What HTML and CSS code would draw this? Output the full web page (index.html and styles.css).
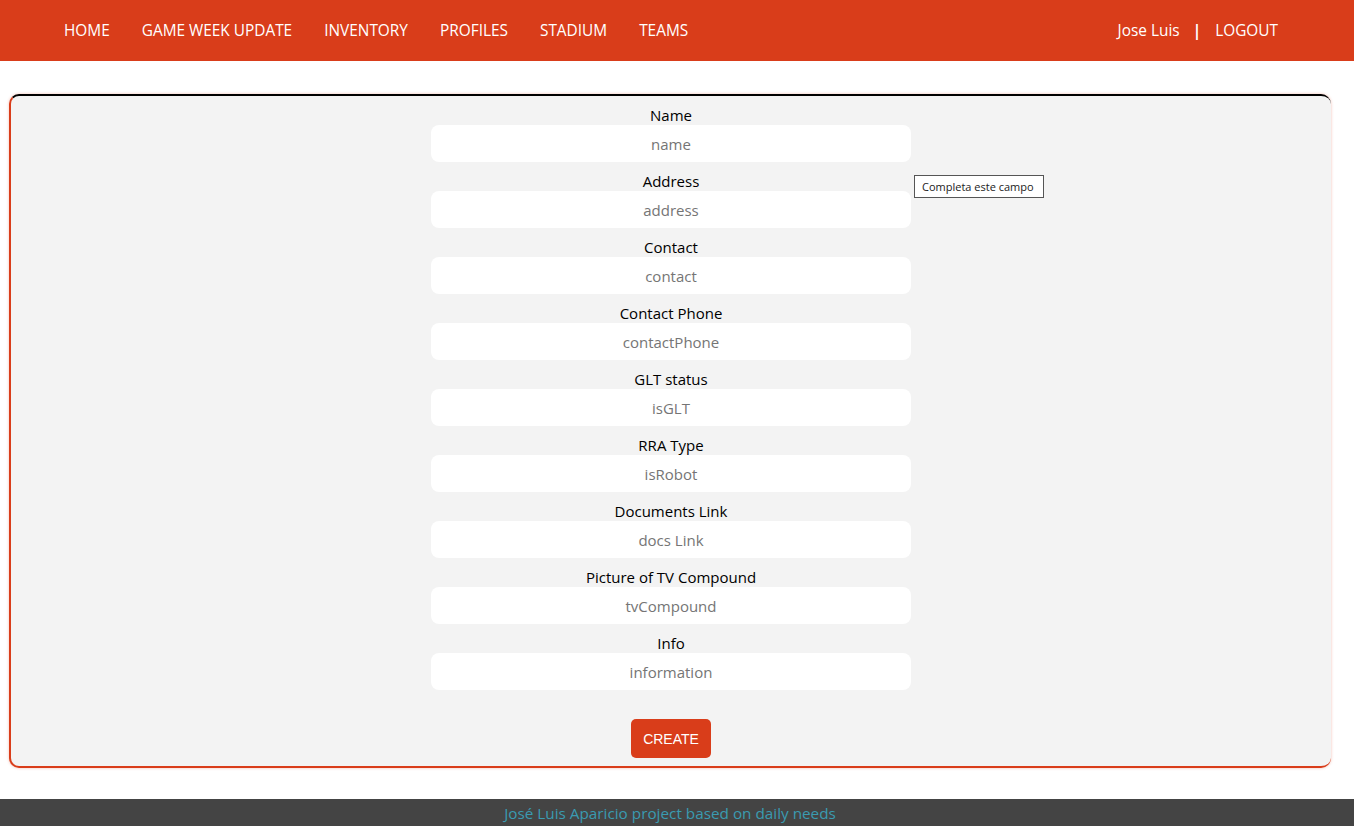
FILE: index.html
```html
<!DOCTYPE html>
<html lang="en">

<head>
  <meta charset="UTF-8" />
  <meta name="viewport" content="width=device-width, initial-scale=1.0" />
  <title>Stadium - Create</title>
  <link rel="stylesheet" href="styles.css">
</head>

<body>
  <header class="navbar">
    <ul class="nav-links">
      <li><a href="#">HOME</a></li>
      <li><a href="#">GAME WEEK UPDATE</a></li>
      <li><a href="#">INVENTORY</a></li>
      <li><a href="#">PROFILES</a></li>
      <li><a href="#">STADIUM</a></li>
      <li><a href="#">TEAMS</a></li>
    </ul>
    <div class="user-box">
      <span class="user-name">Jose Luis</span>
      <span class="divider">|</span>
      <a href="#">LOGOUT</a>
    </div>
  </header>

  <main class="card">
    <form class="stadium-form">
      <div class="field">
        <label for="name">Name</label>
        <input id="name" type="text" placeholder="name" required />
      </div>
      <div class="field">
        <label for="address">Address</label>
        <input id="address" type="text" placeholder="address" required />
        <div class="tooltip">Completa este campo</div>
      </div>
      <div class="field">
        <label for="contact">Contact</label>
        <input id="contact" type="text" placeholder="contact" />
      </div>
      <div class="field">
        <label for="contactPhone">Contact Phone</label>
        <input id="contactPhone" type="text" placeholder="contactPhone" />
      </div>
      <div class="field">
        <label for="isGLT">GLT status</label>
        <input id="isGLT" type="text" placeholder="isGLT" />
      </div>
      <div class="field">
        <label for="isRobot">RRA Type</label>
        <input id="isRobot" type="text" placeholder="isRobot" />
      </div>
      <div class="field">
        <label for="docsLink">Documents Link</label>
        <input id="docsLink" type="text" placeholder="docs Link" />
      </div>
      <div class="field">
        <label for="tvCompound">Picture of TV Compound</label>
        <input id="tvCompound" type="text" placeholder="tvCompound" />
      </div>
      <div class="field">
        <label for="info">Info</label>
        <input id="info" type="text" placeholder="information" />
      </div>
      <button type="button" class="btn-create">CREATE</button>
    </form>
  </main>

  <footer class="footer">
    José Luis Aparicio project based on daily needs
  </footer>
</body>

</html>
```

FILE: styles.css
```css
body {
  font-family: 'Open Sans', 'Noto Sans', sans-serif;
  background-color: #fff;
  margin: 0;
  padding: 0;
}

a {
  color: #fff;
  text-decoration: none;
}

.navbar {
  display: flex;
  justify-content: space-between;
  align-items: center;
  height: 61px;
  padding: 0 76px 1px 64px;
  box-sizing: border-box;
  background-color: #d93d1a;
  color: #fff;
  font-size: 15.4px;
}

.nav-links {
  display: flex;
  gap: 32px;
  list-style: none;
  margin: 0;
  padding: 0;
}

.user-box {
  display: flex;
  align-items: center;
}

.divider {
  margin: 0 14px 0 13px;
  font-weight: bold;
}

.card {
  position: relative;
  width: 1322px;
  margin: 33px 0 0 9px;
  padding: 9px 0 8px;
  box-sizing: border-box;
  background-color: #f3f3f3;
  border-top: 2px solid #000;
  border-left: 2px solid #d93d1a;
  border-bottom: 2px solid #d93d1a;
  border-right: 0;
  border-radius: 10px;
  box-shadow: 0 0 3px rgba(217, 61, 26, 0.35);
}

.stadium-form {
  display: flex;
  flex-direction: column;
  align-items: center;
}

.field {
  position: relative;
  display: flex;
  flex-direction: column;
  align-items: center;
  margin-bottom: 9px;
}

label {
  font-size: 15px;
  line-height: 20px;
  color: #000;
}

input {
  width: 480px;
  height: 37px;
  box-sizing: border-box;
  border: none;
  border-radius: 8px;
  background-color: #fff;
  text-align: center;
  font-family: inherit;
  font-size: 15px;
  outline: none;
}

input::placeholder {
  color: #757575;
}

.tooltip {
  position: absolute;
  left: 483px;
  top: 4px;
  white-space: nowrap;
  padding: 3px 9px 3px 7px;
  border: 1px solid #555;
  background: #fff;
  font-size: 11px;
  color: #222;
}

.btn-create {
  margin-top: 20px;
  width: 80px;
  height: 39px;
  background-color: #d93d1a;
  color: #fff;
  border: none;
  border-radius: 5px;
  font-family: 'Liberation Sans', Arial, sans-serif;
  font-size: 14px;
  cursor: pointer;
}

.footer {
  margin-top: 31px;
  height: 40px;
  padding: 4px 14px 0 0;
  box-sizing: border-box;
  background-color: #444;
  color: #3a9bb1;
  text-align: center;
  font-size: 15.3px;
}
```
